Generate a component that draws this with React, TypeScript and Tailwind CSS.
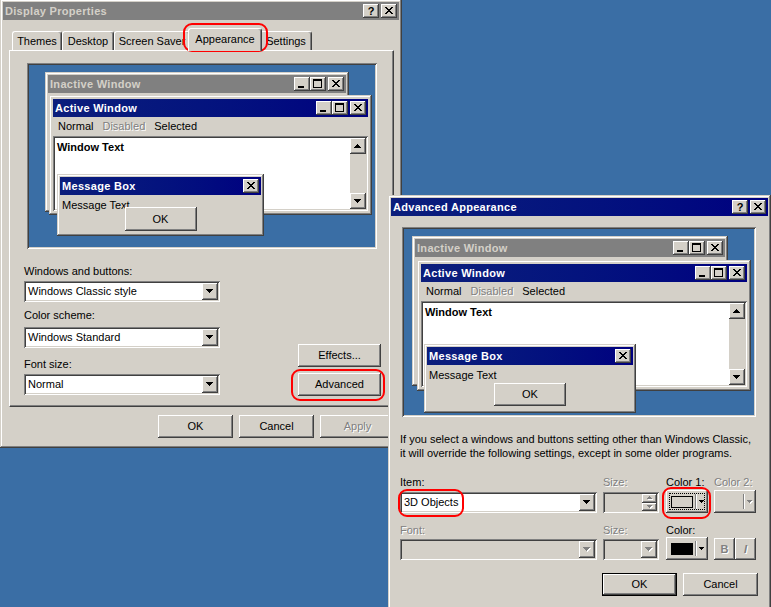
import type { ReactNode } from 'react';

// Classic 3D edges, drawn with inset shadows so they don't shift layout.
const RAISED =
  'shadow-[inset_-1px_-1px_#404040,inset_1px_1px_#ffffff,inset_-2px_-2px_#808080,inset_2px_2px_#d4d0c8]';
const FRAME =
  'shadow-[inset_-1px_-1px_#404040,inset_1px_1px_#d4d0c8,inset_-2px_-2px_#808080,inset_2px_2px_#ffffff]';
const SUNKEN =
  'shadow-[inset_1px_1px_#808080,inset_-1px_-1px_#ffffff,inset_2px_2px_#404040,inset_-2px_-2px_#d4d0c8]';
const DISABLED = 'text-[#808080] [text-shadow:1px_1px_0_#ffffff]';
const ACTIVE_BAR = 'bg-linear-to-r from-[#0c1e7c] to-[#000080] text-white';

const CLOSE_D =
  'M4 3h2v1H4zM10 3h2v1h-2zM5 4h2v1H5zM9 4h2v1H9zM6 5h4v1H6zM7 6h2v1H7zM6 7h4v1H6zM5 8h2v1H5zM9 8h2v1H9zM4 9h2v1H4zM10 9h2v1h-2z';
const MIN_D = 'M4 9h6v2H4z';
const MAX_D = 'M3 2h9v2H3zM3 4h1v7H3zM11 4h1v7h-1zM4 10h7v1H4z';

function CapBtn({ d, children }: { d?: string; children?: ReactNode }) {
  return (
    <div
      className={`relative flex h-[14px] w-[16px] shrink-0 items-center justify-center bg-[#d4d0c8] text-black ${RAISED}`}
    >
      {d && (
        <svg className="absolute inset-0" width="16" height="14" viewBox="0 0 16 14" shapeRendering="crispEdges">
          <path d={d} fill="#000" />
        </svg>
      )}
      {children}
    </div>
  );
}

function HelpClose() {
  return (
    <div className="flex gap-[2px]">
      <CapBtn>
        <span className="pt-px text-[11px] leading-none font-bold">?</span>
      </CapBtn>
      <CapBtn d={CLOSE_D} />
    </div>
  );
}

function MinMaxClose() {
  return (
    <div className="flex">
      <CapBtn d={MIN_D} />
      <CapBtn d={MAX_D} />
      <div className="w-[2px]" />
      <CapBtn d={CLOSE_D} />
    </div>
  );
}

function Caption({ title, active, buttons }: { title: string; active?: boolean; buttons: ReactNode }) {
  return (
    <div
      className={`flex h-[18px] shrink-0 items-center pr-[2px] pl-[2px] ${
        active ? ACTIVE_BAR : 'bg-[#808080] text-[#d4d0c8]'
      }`}
    >
      <span className="flex-1 truncate font-bold tracking-[0.3px]">{title}</span>
      {buttons}
    </div>
  );
}

function Arrow({ up, small, disabled }: { up?: boolean; small?: boolean; disabled?: boolean }) {
  const down = small ? 'M0 0h5v1H0zM1 1h3v1H1zM2 2h1v1H2z' : 'M0 0h7v1H0zM1 1h5v1H1zM2 2h3v1H2zM3 3h1v1H3z';
  const upD = small ? 'M2 0h1v1H2zM1 1h3v1H1zM0 2h5v1H0z' : 'M3 0h1v1H3zM2 1h3v1H2zM1 2h5v1H1zM0 3h7v1H0z';
  const d = up ? upD : down;
  const w = small ? 6 : 8;
  const h = small ? 4 : 5;
  return (
    <svg width={w} height={h} viewBox={`0 0 ${w} ${h}`} shapeRendering="crispEdges">
      {disabled && <path d={d} fill="#ffffff" transform="translate(1 1)" />}
      <path d={d} fill={disabled ? '#808080' : '#000000'} />
    </svg>
  );
}

function Btn({
  children,
  className = '',
  disabled,
  isDefault,
}: {
  children: ReactNode;
  className?: string;
  disabled?: boolean;
  isDefault?: boolean;
}) {
  return (
    <div
      className={`flex shrink-0 items-center justify-center bg-[#d4d0c8] ${RAISED} ${
        isDefault ? 'border border-black' : ''
      } ${disabled ? DISABLED : ''} ${className}`}
    >
      {children}
    </div>
  );
}

function Combo({ value, className = '', disabled }: { value?: string; className?: string; disabled?: boolean }) {
  return (
    <div
      className={`flex h-[21px] shrink-0 p-[2px] ${SUNKEN} ${disabled ? 'bg-[#d4d0c8]' : 'bg-white'} ${className}`}
    >
      <div className="flex min-w-0 flex-1 items-center pl-[2px] whitespace-nowrap">{value}</div>
      <div className={`flex w-[16px] items-center justify-center bg-[#d4d0c8] ${RAISED}`}>
        <Arrow disabled={disabled} />
      </div>
    </div>
  );
}

function Spinner() {
  return (
    <div className={`flex h-[21px] w-full justify-end bg-[#d4d0c8] p-[2px] ${SUNKEN}`}>
      <div className="flex w-[15px] flex-col">
        <div className={`flex flex-1 items-center justify-center ${RAISED}`}>
          <Arrow up small disabled />
        </div>
        <div className={`flex flex-1 items-center justify-center ${RAISED}`}>
          <Arrow small disabled />
        </div>
      </div>
    </div>
  );
}

function ColorBtn({
  swatch,
  focus,
  disabled,
  className = '',
}: {
  swatch: string;
  focus?: boolean;
  disabled?: boolean;
  className?: string;
}) {
  return (
    <div className={`relative flex h-[23px] w-[42px] items-center bg-[#d4d0c8] pl-[5px] ${RAISED} ${className}`}>
      <div className={`h-[12px] w-[22px] ${swatch}`} />
      <div className="ml-[2px] h-[15px] w-[2px] border-r border-l border-r-white border-l-[#808080]" />
      <div className="ml-[2px] flex">
        <Arrow small disabled={disabled} />
      </div>
      {focus && <div className="absolute inset-[3px] border border-dotted border-black" />}
    </div>
  );
}

function ScrollBtn({ up }: { up?: boolean }) {
  return (
    <div className={`flex h-[16px] w-[16px] items-center justify-center bg-[#d4d0c8] ${RAISED}`}>
      <Arrow up={up} />
    </div>
  );
}

function Preview({
  box,
  inactive,
  active,
  msg,
  ok,
  className = '',
}: {
  box: string;
  inactive: string;
  active: string;
  msg: string;
  ok: string;
  className?: string;
}) {
  return (
    <div className={`relative shrink-0 bg-[#3a6ea5] ${SUNKEN} ${box} ${className}`}>
      <div className={`absolute bg-[#d4d0c8] p-[3px] ${FRAME} ${inactive}`}>
        <Caption title="Inactive Window" buttons={<MinMaxClose />} />
      </div>
      <div className={`absolute flex flex-col bg-[#d4d0c8] p-[4px] ${FRAME} ${active}`}>
        <Caption active title="Active Window" buttons={<MinMaxClose />} />
        <div className="flex h-[19px] shrink-0 items-center gap-[9px] pl-[5px]">
          <span>Normal</span>
          <span className={DISABLED}>Disabled</span>
          <span>Selected</span>
        </div>
        <div className={`flex min-h-0 flex-1 bg-white p-[2px] ${SUNKEN}`}>
          <div className="flex-1 pt-[3px] pl-[2px] font-bold">Window Text</div>
          <div className="flex w-[16px] flex-col justify-between bg-[#d4d0c8]">
            <ScrollBtn up />
            <ScrollBtn />
          </div>
        </div>
      </div>
      <div className={`absolute flex flex-col bg-[#d4d0c8] p-[3px] ${FRAME} ${msg}`}>
        <Caption active title="Message Box" buttons={<CapBtn d={CLOSE_D} />} />
        <div className="mt-[4px] pl-[2px] whitespace-nowrap">Message Text</div>
        <div className={`relative flex justify-center ${ok}`}>
          <Btn className="h-full w-[72px]">OK</Btn>
        </div>
      </div>
    </div>
  );
}

const TABS = [
  { label: 'Themes', w: 'w-[50px]' },
  { label: 'Desktop', w: 'w-[52px]' },
  { label: 'Screen Saver', w: 'w-[76px]' },
  { label: 'Appearance', w: 'w-[74px]', selected: true },
  { label: 'Settings', w: 'w-[52px]' },
];

function DisplayProperties() {
  return (
    <div className={`absolute top-[-1px] left-0 flex h-[449px] w-[402px] flex-col bg-[#d4d0c8] p-[3px] ${FRAME}`}>
      <Caption title="Display Properties" buttons={<HelpClose />} />
      <div className="pt-[8px] pl-[6px]">
        <div className="flex h-[22px] items-end pl-[3px]">
          {TABS.map((t) => (
            <div
              key={t.label}
              className={`flex shrink-0 items-center justify-center overflow-hidden rounded-t-[3px] border-t border-r border-l border-t-white border-r-[#404040] border-l-white bg-[#d4d0c8] whitespace-nowrap shadow-[inset_-1px_0_#808080] ${
                t.w
              } ${t.selected ? 'relative z-10 -mx-[2px] -mb-px h-[23px] pb-[2px]' : 'h-[19px]'}`}
            >
              {t.label}
            </div>
          ))}
        </div>
        <div className="flex h-[357px] w-[385px] flex-col border border-t-white border-r-[#404040] border-b-[#404040] border-l-white pt-[12px] pr-[12px] pl-[14px] shadow-[inset_-1px_-1px_#808080]">
          <Preview
            className="ml-[3px]"
            box="h-[186px] w-[350px]"
            inactive="top-[9px] left-[18px] h-[140px] w-[304px]"
            active="top-[32px] left-[22px] h-[120px] w-[323px]"
            msg="top-[111px] left-[30px] w-[207px]"
            ok="mt-[-5px] mb-[2px] h-[24px]"
          />
          <div className="mt-[16px] flex">
            <div className="flex flex-col pb-[1px]">
              <div>Windows and buttons:</div>
              <Combo className="mt-[3px] w-[196px]" value="Windows Classic style" />
              <div className="mt-[7px]">Color scheme:</div>
              <Combo className="mt-[5px] w-[196px]" value="Windows Standard" />
              <div className="mt-[10px]">Font size:</div>
              <Combo className="mt-[3px] w-[196px]" value="Normal" />
            </div>
            <div className="ml-auto flex flex-col gap-[6px] self-end">
              <Btn className="h-[23px] w-[83px]">Effects...</Btn>
              <Btn className="h-[23px] w-[83px]">Advanced</Btn>
            </div>
          </div>
        </div>
        <div className="mt-[8px] flex justify-end gap-[6px] pr-[4px]">
          <Btn className="h-[23px] w-[75px]">OK</Btn>
          <Btn className="h-[23px] w-[75px]">Cancel</Btn>
          <Btn disabled className="h-[23px] w-[75px]">
            Apply
          </Btn>
        </div>
      </div>
    </div>
  );
}

function AdvancedAppearance() {
  return (
    <div
      className={`absolute top-[195px] left-[388px] flex h-[414px] w-[383px] flex-col bg-[#d4d0c8] p-[3px] ${FRAME}`}
    >
      <Caption active title="Advanced Appearance" buttons={<HelpClose />} />
      <div className="flex flex-col pl-[9px]">
        <Preview
          className="mt-[11px] ml-[2px]"
          box="h-[190px] w-[354px]"
          inactive="top-[9px] left-[10px] h-[150px] w-[316px]"
          active="top-[33px] left-[15px] h-[131px] w-[334px]"
          msg="top-[117px] left-[22px] w-[212px]"
          ok="mt-[1px] mb-[4px] h-[23px]"
        />
        <div className="mt-[15px] leading-[14px] whitespace-nowrap">
          <div>If you select a windows and buttons setting other than Windows Classic,</div>
          <div>it will override the following settings, except in some older programs.</div>
        </div>

        <div className="mt-[16px] flex">
          <div className="flex w-[197px] flex-col">
            <div>Item:</div>
            <Combo className="mt-[3px] w-full" value="3D Objects" />
          </div>
          <div className="ml-[6px] flex w-[56px] flex-col">
            <div className={DISABLED}>Size:</div>
            <div className="mt-[3px]">
              <Spinner />
            </div>
          </div>
          <div className="ml-[7px] flex w-[42px] flex-col">
            <div className="whitespace-nowrap">Color 1:</div>
            <ColorBtn className="mt-[1px]" focus swatch="border border-black bg-[#d4d0c8]" />
          </div>
          <div className="ml-[6px] flex w-[42px] flex-col">
            <div className={`whitespace-nowrap ${DISABLED}`}>Color 2:</div>
            <ColorBtn className="mt-[1px]" disabled swatch="" />
          </div>
        </div>

        <div className="mt-[11px] flex">
          <div className="flex w-[197px] flex-col">
            <div className={DISABLED}>Font:</div>
            <Combo className="mt-[2px] w-full" disabled />
          </div>
          <div className="ml-[6px] flex w-[56px] flex-col">
            <div className={DISABLED}>Size:</div>
            <Combo className="mt-[2px] w-full" disabled />
          </div>
          <div className="ml-[7px] flex w-[42px] flex-col">
            <div>Color:</div>
            <ColorBtn className="mt-[0px]" swatch="bg-black" />
          </div>
          <div className="ml-[6px] flex w-[42px] flex-col">
            <div className="h-[13px]" />
            <div className="mt-[1px] flex">
              <Btn disabled className="h-[22px] w-[21px] font-bold">
                B
              </Btn>
              <Btn disabled className="h-[22px] w-[21px] font-bold italic">
                I
              </Btn>
            </div>
          </div>
        </div>

        <div className="mt-[13px] flex justify-end gap-[6px] pr-[10px]">
          <Btn isDefault className="h-[23px] w-[75px]">
            OK
          </Btn>
          <Btn className="h-[23px] w-[75px]">Cancel</Btn>
        </div>
      </div>
    </div>
  );
}

// Red hand-drawn highlight boxes laid over the screenshot.
function Marks() {
  const ring = 'pointer-events-none absolute rounded-[9px] border-2 border-[#ff0000]';
  return (
    <>
      <div className={`${ring} top-[23px] left-[183px] h-[29px] w-[85px]`} />
      <div className={`${ring} top-[369px] left-[291px] h-[32px] w-[94px]`} />
      <div className={`${ring} top-[489px] left-[398px] h-[28px] w-[66px]`} />
      <div className={`${ring} top-[487px] left-[662px] h-[32px] w-[49px]`} />
    </>
  );
}

export default function App() {
  return (
    <div
      className={`relative h-[607px] w-[771px] overflow-hidden bg-[#3a6ea5] font-['Liberation_Sans',Arial,sans-serif] text-[11px] leading-[13px] text-black`}
    >
      <DisplayProperties />
      <AdvancedAppearance />
      <Marks />
    </div>
  );
}
